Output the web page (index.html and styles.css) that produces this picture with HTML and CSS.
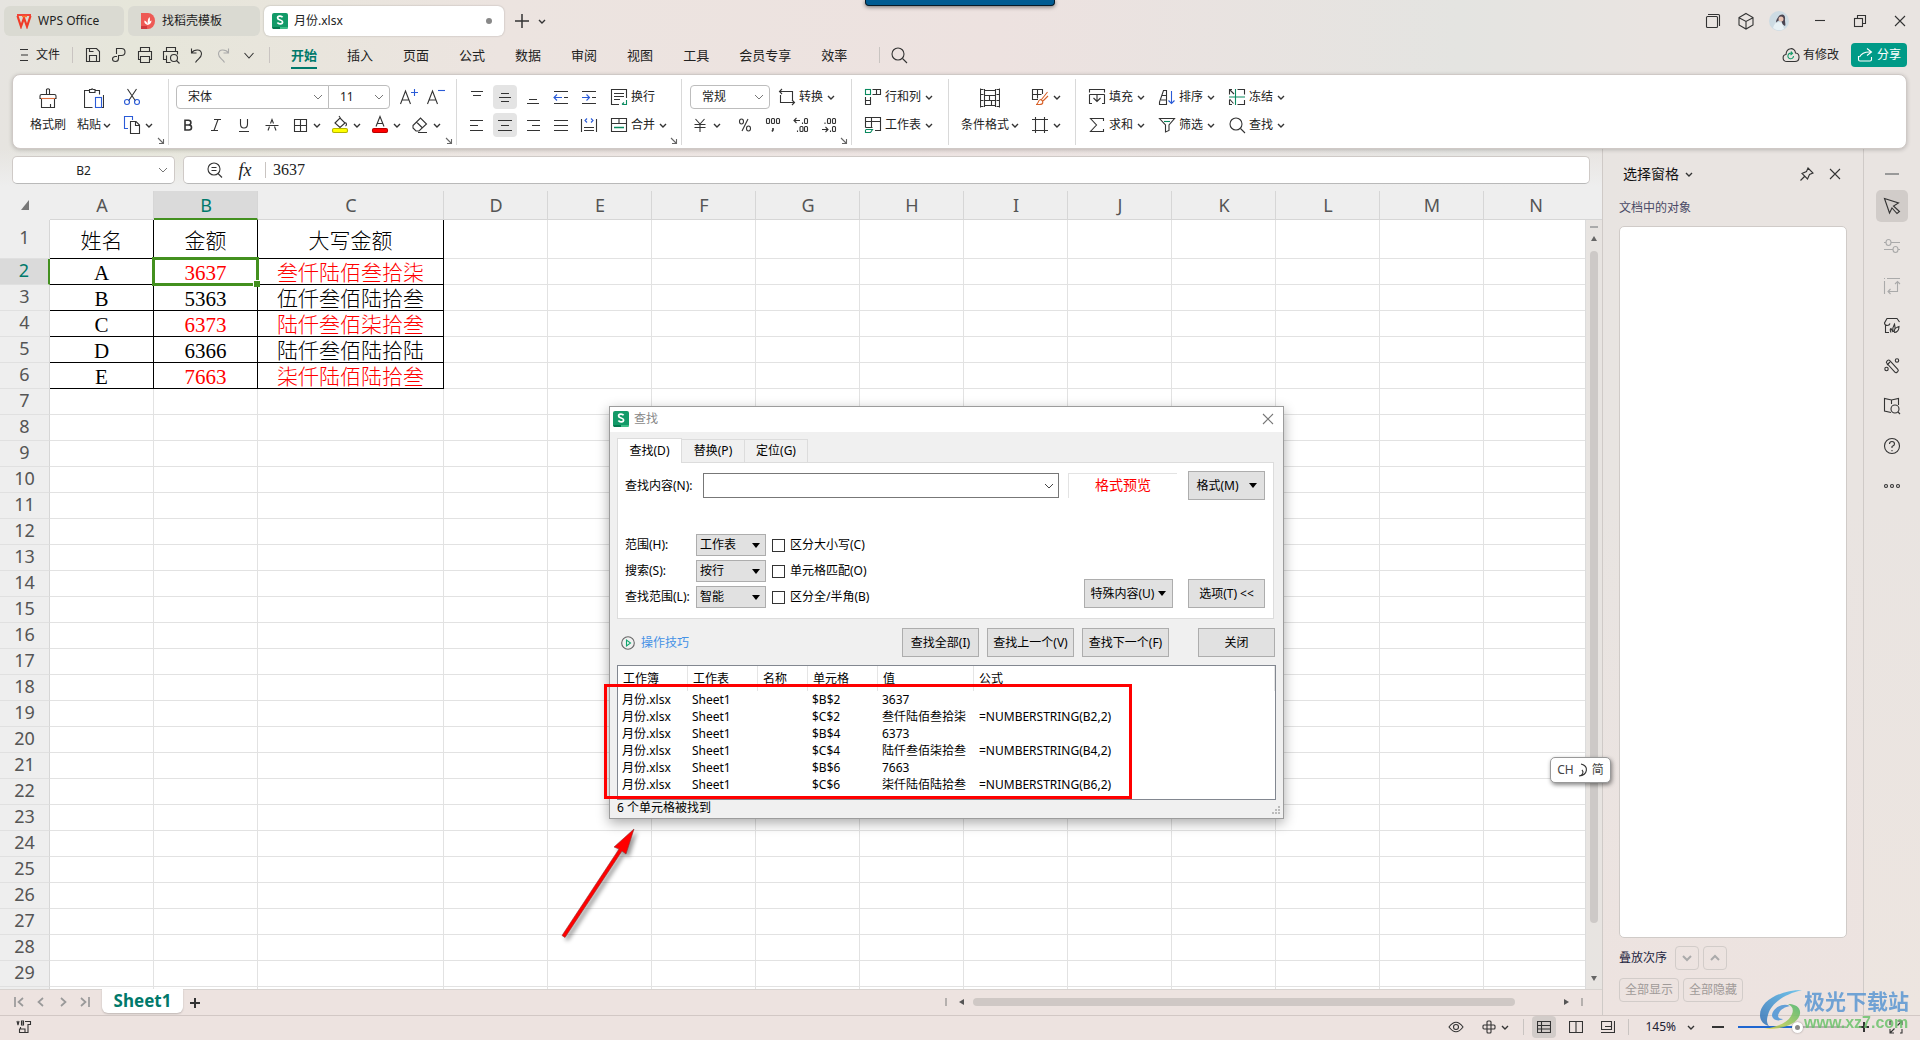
FILE: index.html
```html
<!DOCTYPE html>
<html lang="zh-CN">
<head>
<meta charset="utf-8">
<title>月份.xlsx</title>
<link rel="stylesheet" href="styles.css">
</head>
<body>
<svg class="defs" aria-hidden="true">
  <symbol id="chev" viewBox="0 0 8 8"><path d="M1 3l3 3 3-3" stroke-width="1.4"/></symbol>
  <symbol id="sheet-logo" viewBox="0 0 16 16"><rect width="16" height="16" rx="2" fill="#129a68" stroke="none"/><path d="M0 14h8v2H1z" fill="#04794f" stroke="none"/><path d="M8 14h8v1l-1 1H8z" fill="#3bbd86" stroke="none"/><path d="M10.600 4.300C9.500 2.700 5.600 2.700 5.600 5c0 2.500 5 1.500 5 4 0 2.300-4 2.300-5.200.6" stroke="#fff" stroke-width="1.700"/></symbol>
  <symbol id="launch" viewBox="0 0 8 8"><path d="M1 1l5 5M6.500 2v4.500H2" stroke="#666"/></symbol>
  <symbol id="lens" viewBox="0 0 20 20"><circle cx="9" cy="9" r="6"/><path d="M13.500 13.500L18 18"/></symbol>
</svg>

<div class="screen-clip"></div>

<header class="titlebar">
  <button class="doc-tab home"><svg width="16" height="16" viewBox="0 0 16 16"><path d="M1 2h14" stroke="#f04438" stroke-width="2"/><path d="M1.500 3l3.500 10.500L8 5l3 8.500L14.500 3" stroke="#f03c28" stroke-width="2.200"/><path d="M6 3.500h5" stroke="#ff7a30" stroke-width="1.500"/></svg><span>WPS Office</span></button>
  <button class="doc-tab tpl"><svg width="16" height="16" viewBox="0 0 16 16"><path d="M1 0h7a7 8 0 0 1 0 16H1z" fill="#ee5a55" stroke="none"/><path d="M1 13h6v3H1z" fill="#cf3a3f" stroke="none"/><path d="M7.500 12C4.500 11 4 9 4.500 7.500 6.500 8 7.500 10 7.500 12c0-4 .5-6.500 2-8 1 3 .5 5-2 8 1-3 2.500-4 4-4.500 0 2.500-1.500 4-4 4.500z" fill="#fff" stroke="none"/></svg><span>找稻壳模板</span></button>
  <button class="doc-tab active"><svg width="16" height="16"><use href="#sheet-logo"/></svg><span>月份.xlsx</span><i class="dirty"></i></button>
  <button class="plain" aria-label="新建"><svg width="16" height="16" viewBox="0 0 16 16"><path d="M8 1v14M1 8h14" stroke-width="1.500"/></svg></button>
  <button class="plain" aria-label="更多"><svg width="8" height="8"><use href="#chev"/></svg></button>
  <div class="window-tools">
    <button class="plain" aria-label="标签列表"><svg width="20" height="20" viewBox="0 0 20 20"><rect x="3.500" y="5.500" width="11" height="11" rx="1"/><path d="M5 3.500h10.500q1 0 1 1V15"/></svg></button>
    <button class="plain" aria-label="应用"><svg width="20" height="20" viewBox="0 0 20 20"><path d="M10 2.500l7 4v7.500l-7 4-7-4V6.500zM3.500 7L10 10.500 16.500 7M10 10.500V18"/></svg></button>
    <button class="plain avatar" aria-label="账户"><svg width="20" height="20" viewBox="0 0 20 20"><circle cx="10" cy="10" r="10" fill="#cddbe3" stroke="none"/><path d="M4 17c1-4 3-6 6-6l3 1 2 6a10 10 0 0 1-11-1z" fill="#e8f1f5" stroke="none"/><path d="M11 4c3-1.500 5.500 0 5 4-.3 3 1 5 0 7-2.500-1-3-3-3.500-5l-3-.5-2.500 2c0-3 2-5.500 4-7.500z" fill="#4a4450" stroke="none"/><circle cx="12" cy="8" r="2.500" fill="#e8c3b4" stroke="none"/></svg></button>
    <button class="plain win" aria-label="最小化"><svg width="20" height="20" viewBox="0 0 20 20"><path d="M5 9.500h10"/></svg></button>
    <button class="plain win" aria-label="还原"><svg width="20" height="20" viewBox="0 0 20 20"><rect x="4.500" y="7.500" width="8" height="8"/><path d="M7.500 7.500v-3h8v8h-3"/></svg></button>
    <button class="plain win" aria-label="关闭"><svg width="20" height="20" viewBox="0 0 20 20"><path d="M5 5l10 10M15 5L5 15"/></svg></button>
  </div>
</header>

<nav class="menubar">
  <button class="plain file"><svg width="12" height="14" viewBox="0 0 12 14"><path d="M2 1.500h8M3 7h7M2 12.500h8"/></svg><span>文件</span></button>
  <i class="vsep"></i>
  <div class="quick">
    <button class="plain" aria-label="保存"><svg width="20" height="20" viewBox="0 0 20 20"><path d="M3.500 3.500h10l3 3v10h-13zM6.500 16v-5.500h7V16M6.500 3.500V6.500h4"/></svg></button>
    <button class="plain" aria-label="导出"><svg width="20" height="20" viewBox="0 0 20 20"><path d="M7.500 9V3.500h5a3.500 3.500 0 0 1 0 7H9.500v3q0 3-3 3t-3-2.500q0-2 2.500-2.500h2"/></svg></button>
    <button class="plain" aria-label="打印"><svg width="20" height="20" viewBox="0 0 20 20"><path d="M5.500 6.500v-4h9v4M5.500 14.500h-2v-8h13v8h-2M5.500 11.500h9v6h-9z"/></svg></button>
    <button class="plain" aria-label="打印预览"><svg width="20" height="20" viewBox="0 0 20 20"><path d="M5.500 6.500v-4h9v4M5.500 14.500h-3v-8h14v3M5.500 10.500v7h4"/><circle cx="13" cy="13" r="3.500"/><path d="M15.500 15.500l3 3"/></svg></button>
    <button class="plain" aria-label="撤销"><svg width="20" height="20" viewBox="0 0 20 20"><path d="M4.500 3.500v4.500h5M4.500 8C7 4 14.500 3.500 14.500 9c0 4-4 5-6 8.500"/></svg></button>
    <button class="plain off" aria-label="恢复"><svg width="20" height="20" viewBox="0 0 20 20"><path d="M15.500 3.500v4.500h-5M15.500 8C13 4 5.500 3.500 5.500 9c0 4 4 5 6 8.500"/></svg></button>
    <button class="plain" aria-label="自定义"><svg width="20" height="20" viewBox="0 0 20 20"><path d="M5.500 8l4.500 5 4.500-5"/></svg></button>
  </div>
  <i class="vsep"></i>
  <div class="tabs">
    <a href="#" class="on">开始</a><a href="#">插入</a><a href="#">页面</a><a href="#">公式</a><a href="#">数据</a><a href="#">审阅</a><a href="#">视图</a><a href="#">工具</a><a href="#">会员专享</a><a href="#">效率</a>
  </div>
  <i class="vsep"></i>
  <button class="plain find" aria-label="搜索"><svg width="20" height="20"><use href="#lens"/></svg></button>
  <div class="cloud">
    <svg width="18" height="16" viewBox="0 0 18 16"><path d="M5 14.500C0 14.500 0 8 4 7.500 4.500 0 13 0 13.500 6c5 .5 4.500 8.500-.5 8.500z"/><path d="M11.500 9a2.800 2.800 0 1 1-1.500-2.500M9 4.500l1.500 2L8.500 8" stroke="#129a68"/></svg><span>有修改</span>
    <button class="share"><svg width="16" height="16" viewBox="0 0 16 16"><path d="M10 1.500L14.500 5 10 8.500M14 5C7 4.500 4 7 2.500 10M1.500 9v3.500q0 1.500 1.500 1.500h10q1.500 0 1.500-1.500V10" stroke="#fff"/></svg><span>分享</span></button>
  </div>
</nav>

<section class="ribbon">
  <div class="group g-clip">
    <button class="big"><svg width="20" height="20" viewBox="0 0 20 20"><path d="M8.500 6.500V1.500q1.500-1.500 3 0v5M3.500 6.500h13q1.500 0 1.500 1.500v2.500H2V8q0-1.500 1.500-1.500zM3.500 11v8.500h13V11M12.500 19v-3"/><path d="M3 10.500h14" stroke="#e07040"/></svg><span>格式刷</span></button>
    <button class="big"><svg width="20" height="20" viewBox="0 0 20 20"><path d="M5 2.500H.5v17h8M11 2.500h4.500v4M5.500 4.500v-3h2q.5-1.500 1.500 0h2v3z"/><path d="M19.500 7v12.500h-8"/><rect x="11.500" y="9.500" width="6" height="10" stroke="#2a5bd7" fill="#fff"/></svg><span>粘贴<svg width="8" height="8"><use href="#chev"/></svg></span></button>
    <div class="rows">
      <div class="row"><button class="tool" aria-label="剪切"><svg width="20" height="20" viewBox="0 0 20 20"><path d="M5.500 2l8 12M14.500 2l-8 12"/><circle cx="5" cy="15" r="2.500" stroke="#2a5bd7"/><circle cx="15" cy="15" r="2.500" stroke="#2a5bd7"/></svg></button></div>
      <div class="row"><button class="tool" aria-label="复制"><svg width="20" height="20" viewBox="0 0 20 20"><path d="M6 13.500H2.500v-12h8V5" stroke="#2a5bd7"/><path d="M8.500 6.500h5.500l3.500 3.500v8.500h-9zM13.500 6.500v4h4"/></svg><svg width="8" height="8"><use href="#chev"/></svg></button></div>
    </div>
    <svg class="launch" width="8" height="8"><use href="#launch"/></svg>
  </div>

  <div class="group g-font">
    <div class="rows">
      <div class="row">
        <select class="combo font-name" aria-label="字体"><option>宋体</option></select><select class="combo font-size" aria-label="字号"><option>11</option></select>
        <button class="tool step" aria-label="增大字号"><svg width="20" height="20" viewBox="0 0 20 20"><path d="M1.500 17L6.500 4l5 13M3 13h7"/><path d="M12 5.500h7M15.500 2v7" stroke="#2a5bd7"/></svg></button>
        <button class="tool" aria-label="减小字号"><svg width="20" height="20" viewBox="0 0 20 20"><path d="M1.500 17L6.500 4l5 13M3 13h7"/><path d="M12 3.500h7" stroke="#2a5bd7"/></svg></button>
      </div>
      <div class="row tight">
        <button class="tool" aria-label="加粗"><svg width="20" height="20" viewBox="0 0 20 20"><path d="M7 5.200h3.500a2.300 2.300 0 0 1 0 4.800H7zM7 10h4a2.500 2.500 0 0 1 0 5H7z" stroke-width="1.600"/></svg></button>
        <button class="tool" aria-label="倾斜"><svg width="20" height="20" viewBox="0 0 20 20"><path d="M8 4.500h7M5 15.500h7M12 4.500l-4 11"/></svg></button>
        <button class="tool" aria-label="下划线"><svg width="20" height="20" viewBox="0 0 20 20"><path d="M6.500 4v5q0 4 3.500 4t3.500-4V4M5 16.500h10"/></svg></button>
        <button class="tool" aria-label="删除线"><svg width="20" height="20" viewBox="0 0 20 20"><path d="M6 15.500l1.500-4M14 15.500l-1.500-4M8.500 8.500L10 4.500l1.500 4M3.500 10.500h13"/></svg></button>
        <button class="tool split" aria-label="边框"><svg width="20" height="20" viewBox="0 0 20 20"><path d="M4.500 4.500h12v12h-12zM10.500 4.500v12M4.500 10.500h12"/></svg><svg width="8" height="8"><use href="#chev"/></svg></button>
        <button class="tool split" aria-label="填充颜色"><svg width="20" height="20" viewBox="0 0 20 20"><path d="M5 8l5-5 5 5-5 4.500zM9 1l2 3M15.500 7.500q2 2 0 3.500"/><rect x="2.500" y="13.500" width="15" height="4" rx="1.500" fill="#ff0" stroke="#b5b500"/></svg><svg width="8" height="8"><use href="#chev"/></svg></button>
        <button class="tool split" aria-label="字体颜色"><svg width="20" height="20" viewBox="0 0 20 20"><path d="M6 11.500L10 1.500l4 10M7.500 8.500h5"/><rect x="2.500" y="13.500" width="15" height="4" rx="1.500" fill="#f00" stroke="#b00"/></svg><svg width="8" height="8"><use href="#chev"/></svg></button>
        <button class="tool split" aria-label="清除"><svg width="20" height="20" viewBox="0 0 20 20"><path d="M3 10.500l7.500-7.500 6 6-7.500 7H6L3 13zM6.500 7l6 6M8 17.500h9"/></svg><svg width="8" height="8"><use href="#chev"/></svg></button>
      </div>
    </div>
    <svg class="launch" width="8" height="8"><use href="#launch"/></svg>
  </div>

  <div class="group g-align">
    <div class="rows">
      <div class="row gap4">
        <button class="tool" aria-label="顶端对齐"><svg width="20" height="20" viewBox="0 0 20 20"><path d="M4 4.500h12M6 8.500h8"/></svg></button>
        <button class="tool sel" aria-label="垂直居中"><svg width="20" height="20" viewBox="0 0 20 20"><path d="M6 6.500h8M4 10.500h12M6 14.500h8"/></svg></button>
        <button class="tool" aria-label="底端对齐"><svg width="20" height="20" viewBox="0 0 20 20"><path d="M6 12.500h8M4 16.500h12"/></svg></button>
        <button class="tool" aria-label="减少缩进"><svg width="20" height="20" viewBox="0 0 20 20"><path d="M3 4.500h14M13 10.500h4M3 16.500h14"/><path d="M3 10.500h8M6 7.500l-3 3 3 3" stroke="#2a5bd7"/></svg></button>
        <button class="tool" aria-label="增加缩进"><svg width="20" height="20" viewBox="0 0 20 20"><path d="M3 4.500h14M13 10.500h4M3 16.500h14"/><path d="M3 10.500h8M7.500 7.500l3 3-3 3" stroke="#2a5bd7"/></svg></button>
        <button class="tool lab"><svg width="20" height="20" viewBox="0 0 20 20"><path d="M10 17.500H2.500v-15h15V11M5 6.500h10M5 9.500h10M5 12.500h6"/><path d="M17.500 13v4.500H13M15 15.500l-2 2" stroke="#0a8a5f"/></svg><span>换行</span></button>
      </div>
      <div class="row gap4">
        <button class="tool" aria-label="左对齐"><svg width="20" height="20" viewBox="0 0 20 20"><path d="M3 5.500h13M3 10.500h8M3 15.500h13"/></svg></button>
        <button class="tool sel" aria-label="水平居中"><svg width="20" height="20" viewBox="0 0 20 20"><path d="M3 5.500h14M6 10.500h8M3 15.500h14"/></svg></button>
        <button class="tool" aria-label="右对齐"><svg width="20" height="20" viewBox="0 0 20 20"><path d="M4 5.500h13M9 10.500h8M4 15.500h13"/></svg></button>
        <button class="tool" aria-label="两端对齐"><svg width="20" height="20" viewBox="0 0 20 20"><path d="M3 5.500h14M3 10.500h14M3 15.500h14"/></svg></button>
        <button class="tool" aria-label="分散对齐"><svg width="20" height="20" viewBox="0 0 20 20"><path d="M2.500 4v13M17.500 4v13M5 12.500h10M5 15.500h10"/><path d="M8 3.500l-2 2 2 2M12 3.500l2 2-2 2" stroke="#2a5bd7"/></svg></button>
        <button class="tool lab"><svg width="20" height="20" viewBox="0 0 20 20"><path d="M2.500 3.500h15v13h-15zM2.500 8.500h15M10 3.500v5"/><path d="M5 12.500h10" stroke="#0a8a5f" stroke-width="1.500"/></svg><span>合并</span><svg width="8" height="8"><use href="#chev"/></svg></button>
      </div>
    </div>
    <svg class="launch" width="8" height="8"><use href="#launch"/></svg>
  </div>

  <div class="group g-num">
    <div class="rows">
      <div class="row">
        <select class="combo num-format" aria-label="数字格式"><option>常规</option></select>
        <button class="tool lab"><svg width="20" height="20" viewBox="0 0 20 20"><path d="M5 2l-2.500 2.500L5 7M2.500 4.500H15.500V13M3.500 8v7.500H17.500M15 13l2.500 2.500L15 18"/></svg><span>转换</span><svg width="8" height="8"><use href="#chev"/></svg></button>
      </div>
      <div class="row gap4">
        <button class="tool yen" aria-label="货币"><svg width="20" height="20" viewBox="0 0 20 20"><path d="M5.500 4l4.500 5 4.500-5M4.500 9.500h11M4.500 12.500h11M10 9v8"/></svg><svg width="8" height="8"><use href="#chev"/></svg></button>
        <button class="tool" aria-label="百分比"><svg width="20" height="20" viewBox="0 0 20 20"><ellipse cx="6.500" cy="6.500" rx="2" ry="2.500"/><ellipse cx="13.500" cy="13.500" rx="2" ry="2.500"/><path d="M13 4L7 16"/></svg></button>
        <button class="tool" aria-label="千位分隔"><svg width="20" height="20" viewBox="0 0 20 20"><rect x="3.500" y="3.500" width="3" height="5" rx="1"/><rect x="8.500" y="3.500" width="3" height="5" rx="1"/><rect x="13.500" y="3.500" width="3" height="5" rx="1"/><path d="M10 13v2l-1 1.500" stroke-width="1.600"/></svg></button>
        <button class="tool" aria-label="增加小数位"><svg width="20" height="20" viewBox="0 0 20 20"><path d="M9 5.500H3M5.500 3L3 5.500 5.500 8M11.500 7.500v1.500M6.500 15.500v1.500"/><rect x="13.500" y="3.500" width="3" height="5" rx="1"/><rect x="9" y="11.500" width="3" height="5" rx="1"/><rect x="13.500" y="11.500" width="3" height="5" rx="1"/></svg></button>
        <button class="tool" aria-label="减少小数位"><svg width="20" height="20" viewBox="0 0 20 20"><path d="M3 14.500h6M6.500 12L9 14.500 6.500 17M6 7.500v1.500M11.500 15.500v1.500"/><rect x="8.500" y="3.500" width="3" height="5" rx="1"/><rect x="13.500" y="3.500" width="3" height="5" rx="1"/><rect x="13.500" y="11.500" width="3" height="5" rx="1"/></svg></button>
      </div>
    </div>
    <svg class="launch" width="8" height="8"><use href="#launch"/></svg>
  </div>

  <div class="group g-rows">
    <div class="rows">
      <div class="row"><button class="tool lab"><svg width="20" height="20" viewBox="0 0 20 20"><path d="M9.500 2.500h8v5h-8M13.500 2.500v5M2.500 10v7.500h5V10M2.500 13.500h5"/><rect x="2.500" y="2.500" width="5" height="5" stroke="#0a8a5f"/></svg><span>行和列</span><svg width="8" height="8"><use href="#chev"/></svg></button></div>
      <div class="row"><button class="tool lab"><svg width="20" height="20" viewBox="0 0 20 20"><path d="M2.500 12.500v-10h15v13H12M2.500 6.500h15M8.500 2.500v10M2.500 12.500h7"/><path d="M2.500 15v2.500h5l2-3h-7" stroke="#0a8a5f"/></svg><span>工作表</span><svg width="8" height="8"><use href="#chev"/></svg></button></div>
    </div>
  </div>

  <div class="group g-cond">
    <button class="big"><svg width="20" height="20" viewBox="0 0 20 20"><path d="M.5 .5v19M19.500.5v19M.5 1.500h3M16.500 1.500h3M.5 6.500h3M16.500 6.500h3M.5 12.500h3M16.500 12.500h3M.5 18.500h3M16.500 18.500h3M4.500 1v18M15.500 1v18M4.500 2.500h11M4.500 7.500h11M4.500 12.500h11M4.500 17.500h11M9.500 7.500v5M11.500 12.500v5"/></svg><span>条件格式<svg width="8" height="8"><use href="#chev"/></svg></span></button>
    <div class="rows">
      <div class="row"><button class="tool" aria-label="单元格样式"><svg width="20" height="20" viewBox="0 0 20 20"><path d="M8 12.500H2.500v-10h10V7M2.500 7.500h9M7.500 2.500v9"/><path d="M17.500 5l-6 7.500M18 9l-5 5M6 17.500c3 0 1-4 4.500-5 3 1 3.500 5-1 5z" stroke="#d8622a"/></svg><svg width="8" height="8"><use href="#chev"/></svg></button></div>
      <div class="row"><button class="tool" aria-label="单元格"><svg width="20" height="20" viewBox="0 0 20 20"><path d="M5.500 2v16M14.500 2v16M2 4.500h16M2 15.500h16"/></svg><svg width="8" height="8"><use href="#chev"/></svg></button></div>
    </div>
  </div>

  <div class="group g-edit">
    <div class="rows">
      <div class="row">
        <button class="tool lab"><svg width="20" height="20" viewBox="0 0 20 20"><path d="M2.500 5.500v-3h15v3M2.500 7.500h15M2.500 7.500v9H5M17.500 7.500v9H15M10 7v7.500M6.500 11l3.500 3.500 3.500-3.500"/></svg><span>填充</span><svg width="8" height="8"><use href="#chev"/></svg></button>
        <button class="tool lab"><svg width="20" height="20" viewBox="0 0 20 20"><path d="M2.500 17.500V15L6.500 3.500h3v14zM5 8.500h4.500M4 13h5.500"/><path d="M14.500 4v12.500M11.500 13.500l3 3 3-3" stroke="#2a5bd7"/></svg><span>排序</span><svg width="8" height="8"><use href="#chev"/></svg></button>
        <button class="tool lab"><svg width="20" height="20" viewBox="0 0 20 20"><path d="M5 2.500H2.500v5M10.500 2.500h7v5M2.500 13v4.500H5M10.500 17.500h7V13M3 3l4 4M2.500 12l4 4.500"/><path d="M2 10h16M8.500 2v16" stroke="#0a8a5f"/></svg><span>冻结</span><svg width="8" height="8"><use href="#chev"/></svg></button>
      </div>
      <div class="row">
        <button class="tool lab"><svg width="20" height="20" viewBox="0 0 20 20"><path d="M16.500 6V3.500h-13L9.500 10l-6 6.500h13V14"/></svg><span>求和</span><svg width="8" height="8"><use href="#chev"/></svg></button>
        <button class="tool lab"><svg width="20" height="20" viewBox="0 0 20 20"><path d="M2.500 3.500h15L12 10v5.500L8.500 17v-7z"/><path d="M7 6.500h6" stroke="#0a8a5f"/></svg><span>筛选</span><svg width="8" height="8"><use href="#chev"/></svg></button>
        <button class="tool lab"><svg width="20" height="20"><use href="#lens"/></svg><span>查找</span><svg width="8" height="8"><use href="#chev"/></svg></button>
      </div>
    </div>
  </div>
</section>

<main class="work">
  <div class="sheet-side">
    <div class="formula-row">
      <input class="name-box" aria-label="名称框" value="B2">
      <div class="formula-box">
        <button class="plain" aria-label="缩小"><svg width="20" height="20" viewBox="0 0 20 20"><circle cx="10" cy="9" r="6"/><path d="M14 13.500l4 4M7.500 7.500h5M7.500 10.500h5"/></svg></button>
        <button class="plain fx" aria-label="插入函数">fx</button>
        <i class="vsep"></i>
        <input aria-label="编辑栏" value="3637">
      </div>
    </div>
    <div class="grid-row">
      <div class="grid-view">
        <table class="grid" id="grid">
          <colgroup><col class="c-head"><col><col><col class="c-wide"></colgroup>
          <thead><tr><th class="corner"><svg width="8" height="10" viewBox="0 0 8 10"><path d="M8 0v10H0z" fill="#777" stroke="none"/></svg></th><th>A</th><th class="hot">B</th><th>C</th></tr></thead>
          <tbody>
            <tr class="first"><th>1</th><td>姓名</td><td>金额</td><td>大写金额</td></tr>
            <tr><th class="hot">2</th><td>A</td><td class="red current">3637</td><td class="red">叁仟陆佰叁拾柒</td></tr>
            <tr><th>3</th><td>B</td><td>5363</td><td>伍仟叁佰陆拾叁</td></tr>
            <tr><th>4</th><td>C</td><td class="red">6373</td><td class="red">陆仟叁佰柒拾叁</td></tr>
            <tr><th>5</th><td>D</td><td>6366</td><td>陆仟叁佰陆拾陆</td></tr>
            <tr><th>6</th><td>E</td><td class="red">7663</td><td class="red">柒仟陆佰陆拾叁</td></tr>
          </tbody>
        </table>
      </div>
      <div class="vscroll">
        <div class="vs-head"></div>
        <i class="vs-dash"></i>
        <svg width="8" height="6" viewBox="0 0 8 6"><path d="M4 0l3 5H1z" fill="#666" stroke="none"/></svg>
        <i class="vs-thumb"></i>
        <svg width="8" height="6" viewBox="0 0 8 6"><path d="M4 6L1 1h6z" fill="#666" stroke="none"/></svg>
      </div>
    </div>
    <div class="sheet-tabs">
      <div class="nav-arrows">
        <svg width="12" height="12" viewBox="0 0 12 12"><path d="M2 1v10M10 2L5.500 6l4.500 4"/></svg>
        <svg width="12" height="12" viewBox="0 0 12 12"><path d="M8 2L3.500 6 8 10"/></svg>
        <svg width="12" height="12" viewBox="0 0 12 12"><path d="M4 2l4.500 4L4 10"/></svg>
        <svg width="12" height="12" viewBox="0 0 12 12"><path d="M10 1v10M2 2l4.500 4L2 10"/></svg>
      </div>
      <button class="sheet-tab">Sheet1</button>
      <button class="plain add" aria-label="新建工作表"><svg width="10" height="10" viewBox="0 0 10 10"><path d="M5 0v10M0 5h10" stroke-width="2"/></svg></button>
      <div class="hscroll">
        <i class="tick"></i>
        <svg width="6" height="8" viewBox="0 0 6 8"><path d="M0 4l5-3v6z" fill="#555" stroke="none"/></svg>
        <i class="hs-thumb"></i>
        <svg width="6" height="8" viewBox="0 0 6 8"><path d="M6 4L1 1v6z" fill="#555" stroke="none"/></svg>
        <i class="tick"></i>
      </div>
    </div>
  </div>

  <aside class="pane">
    <div class="pane-head">
      <button class="plain pane-title">选择窗格<svg width="8" height="8"><use href="#chev"/></svg></button>
      <button class="plain pin" aria-label="固定"><svg width="16" height="16" viewBox="0 0 16 16"><path d="M9 2l5 5-3.500 1.500L8.500 13 3 7.500l4.500-2zM5.500 10.500L1.500 14.500"/></svg></button>
      <button class="plain" aria-label="关闭窗格"><svg width="12" height="12" viewBox="0 0 12 12"><path d="M1 1l10 10M11 1L1 11"/></svg></button>
    </div>
    <p class="pane-sub">文档中的对象</p>
    <div class="object-list"></div>
    <div class="order"><span>叠放次序</span>
      <button aria-label="下移"><svg width="12" height="8" viewBox="0 0 12 8"><path d="M2 2l4 4 4-4" stroke="#aaa" stroke-width="2"/></svg></button><button aria-label="上移"><svg width="12" height="8" viewBox="0 0 12 8"><path d="M2 6l4-4 4 4" stroke="#aaa" stroke-width="2"/></svg></button></div>
    <div class="show"><button disabled>全部显示</button><button disabled>全部隐藏</button></div>
  </aside>

  <aside class="rail">
    <i class="rail-dash"></i>
    <button class="on" aria-label="选择"><svg width="20" height="20" viewBox="0 0 20 20"><path d="M2.500 2.500l14 4.500-5 3 6 5.500-2.500 2-5-5.500-2.500 5z"/></svg></button>
    <button class="off" aria-label="属性"><svg width="20" height="20" viewBox="0 0 20 20"><path d="M2 6.500h2M9 6.500h9M2 13.500h9M16 13.500h2"/><ellipse cx="6.500" cy="6.500" rx="2.500" ry="3"/><ellipse cx="13.500" cy="13.500" rx="2.500" ry="3"/></svg></button>
    <button class="off" aria-label="智能布局"><svg width="20" height="20" viewBox="0 0 20 20"><path d="M2 2.500h1M5 2.500h13M2.500 5v13M15.500 6v9.500H6M13 8l2.500-2.500L18 8M8.500 13L6 15.500 8.500 18"/></svg></button>
    <button aria-label="稻壳"><svg width="20" height="20" viewBox="0 0 20 20"><path d="M8 7.500Q7.500 9.500 5 9.500 2.500 9 2.500 7L5 2.500h10L17.500 6M3.500 9.500v7H7M9 16.500c-1.500-3 0-4 0-4l2 3.500c-1-4 1.500-8 1.500-8 1.500 4-.5 8-.5 8 0-3 3-5 5-5.500 0 4-2 6-5 6"/></svg></button>
    <button aria-label="工具"><svg width="20" height="20" viewBox="0 0 20 20"><rect x="3" y="8" width="15" height="4" rx="1.500" transform="rotate(48 10 10)"/><circle cx="15" cy="4.500" r="1.700"/><circle cx="4.500" cy="13" r="1.700"/><path d="M5 9l3-3"/></svg></button>
    <button aria-label="查阅"><svg width="20" height="20" viewBox="0 0 20 20"><path d="M9 16.500L2.500 15V2.500l7 1.500 7-1.500V9M9.500 4v4"/><circle cx="13" cy="13" r="4"/><path d="M16 16l2 2"/></svg></button>
    <button aria-label="帮助"><svg width="20" height="20" viewBox="0 0 20 20"><circle cx="10" cy="10" r="7.500"/><path d="M7.500 8q0-2.500 2.500-2.500T12.500 8q0 1.500-2.500 2.500v1.500M10 14v1.200"/></svg></button>
    <button aria-label="更多"><svg width="20" height="20" viewBox="0 0 20 20"><circle cx="4" cy="10" r="1.500"/><circle cx="10" cy="10" r="1.500"/><circle cx="16" cy="10" r="1.500"/></svg></button>
  </aside>
</main>

<footer class="status">
  <button class="plain macro" aria-label="宏"><svg width="16" height="14" viewBox="0 0 16 14"><path d="M1 1l1 4 1-4M5.500 1v4h2v-2h-2 2V1zM9 1.500h5.500v3H12v8H3.500V9H9v3.500M4.500 7v2"/></svg></button>
  <div class="status-right">
    <button class="plain" aria-label="护眼"><svg width="16" height="16" viewBox="0 0 16 16"><path d="M1 8q7-9.500 14 0-7 9.500-14 0z"/><circle cx="8" cy="8" r="2.500"/></svg></button>
    <button class="plain dd" aria-label="定位"><svg width="14" height="14" viewBox="0 0 14 14"><rect x="5" y="1" width="4" height="12" rx="1"/><rect x="1" y="5" width="12" height="4" rx="1"/></svg><svg width="8" height="8"><use href="#chev"/></svg></button>
    <i class="vsep"></i>
    <button class="plain view on" aria-label="普通视图"><svg width="14" height="14" viewBox="0 0 14 14"><path d="M.5 1.500h13v11H.5zM.5 5.500h13M.5 9h13M4.500 1.500v11"/></svg></button>
    <button class="plain view" aria-label="分页预览"><svg width="14" height="14" viewBox="0 0 14 14"><path d="M.5 1.500h13v11H.5zM7 1.500v11"/></svg></button>
    <button class="plain view" aria-label="页面布局"><svg width="14" height="14" viewBox="0 0 14 14"><path d="M.5 1.500h10v8H.5zM13.500 1v11.500H0M4 6.500h6.500"/></svg></button>
    <i class="vsep"></i>
    <button class="plain zoomv">145%<svg width="8" height="8"><use href="#chev"/></svg></button>
    <button class="plain" aria-label="缩小显示"><svg width="12" height="12" viewBox="0 0 12 12"><path d="M0 6h12" stroke-width="2"/></svg></button>
    <input type="range" class="zoom" aria-label="显示比例" min="0" max="100" value="56">
    <button class="plain" aria-label="放大显示"><svg width="12" height="12" viewBox="0 0 12 12"><path d="M1 6h10M6 1v10" stroke-width="2"/></svg></button>
    <button class="plain full" aria-label="全屏"><svg width="14" height="14" viewBox="0 0 14 14"><path d="M9 1h4v4M13 1L8.500 5.500M5 13H1V9M1 13l4.500-4.500M1 5V1h2M13 9v4h-2"/></svg></button>
  </div>
</footer>

<section class="dialog">
  <header class="dlg-title"><svg width="16" height="16"><use href="#sheet-logo"/></svg><span>查找</span><button class="plain" aria-label="关闭对话框"><svg width="12" height="12" viewBox="0 0 12 12"><path d="M1 1l10 10M11 1L1 11" stroke="#777"/></svg></button></header>
  <div class="dlg-tabs"><button class="on">查找(D)</button><button>替换(P)</button><button>定位(G)</button></div>
  <form class="dlg-panel">
    <div class="what">
      <label for="what">查找内容(N):</label><input id="what" type="text">
      <output>格式预览</output>
      <button type="button" class="btn w77">格式(M)<i class="tri"></i></button>
    </div>
    <div class="opts">
      <div class="opt-grid">
        <label for="o1">范围(H):</label><select id="o1"><option>工作表</option></select><label class="chk"><input type="checkbox">区分大小写(C)</label>
        <label for="o2">搜索(S):</label><select id="o2"><option>按行</option></select><label class="chk"><input type="checkbox">单元格匹配(O)</label>
        <label for="o3">查找范围(L):</label><select id="o3"><option>智能</option></select><label class="chk"><input type="checkbox">区分全/半角(B)</label>
      </div>
      <button type="button" class="btn w89">特殊内容(U)<i class="tri"></i></button>
      <button type="button" class="btn w77">选项(T) &lt;&lt;</button>
    </div>
  </form>
  <div class="dlg-actions">
    <a href="#"><svg width="14" height="14" viewBox="0 0 14 14"><circle cx="7" cy="7" r="6.300" stroke="#666"/><path d="M5.500 4v6L9.500 7z" stroke="#12a56f"/></svg>操作技巧</a>
    <button class="btn w77">查找全部(I)</button><button class="btn w87">查找上一个(V)</button><button class="btn w87">查找下一个(F)</button><button class="btn w77 close">关闭</button>
  </div>
  <div class="results">
    <table>
      <colgroup><col class="r70"><col class="r70"><col class="r50"><col class="r70"><col class="r96"><col></colgroup>
      <thead><tr><th>工作簿</th><th>工作表</th><th>名称</th><th>单元格</th><th>值</th><th>公式</th></tr></thead>
      <tbody>
        <tr><td>月份.xlsx</td><td>Sheet1</td><td></td><td>$B$2</td><td>3637</td><td></td></tr>
        <tr><td>月份.xlsx</td><td>Sheet1</td><td></td><td>$C$2</td><td>叁仟陆佰叁拾柒</td><td>=NUMBERSTRING(B2,2)</td></tr>
        <tr><td>月份.xlsx</td><td>Sheet1</td><td></td><td>$B$4</td><td>6373</td><td></td></tr>
        <tr><td>月份.xlsx</td><td>Sheet1</td><td></td><td>$C$4</td><td>陆仟叁佰柒拾叁</td><td>=NUMBERSTRING(B4,2)</td></tr>
        <tr><td>月份.xlsx</td><td>Sheet1</td><td></td><td>$B$6</td><td>7663</td><td></td></tr>
        <tr><td>月份.xlsx</td><td>Sheet1</td><td></td><td>$C$6</td><td>柒仟陆佰陆拾叁</td><td>=NUMBERSTRING(B6,2)</td></tr>
      </tbody>
    </table>
  </div>
  <div class="dlg-status"><span>6 个单元格被找到</span><svg width="9" height="9" viewBox="0 0 9 9"><path d="M7 0h2v2H7zM7 3h2v2H7zM4 3h2v2H4zM7 6h2v2H7zM4 6h2v2H4zM1 6h2v2H1z" fill="#bbb" stroke="none"/></svg></div>
  <div class="mark-box"></div>
</section>

<svg class="mark-arrow" width="90" height="130" viewBox="0 0 90 130"><g transform="translate(-555 -820)"><path d="M634 829l-20 18 5 2-57 86.500 3 2 57-86.500 4 3z" fill="#f00" stroke="#903030" stroke-width=".6"/></g></svg>

<div class="ime"><span>CH</span><svg width="12" height="14" viewBox="0 0 12 14"><path d="M4 1c8 2 7 11-2 12 4-1 5-4 3-6" stroke="#333"/></svg><span>简</span></div>

<div class="brand">
  <svg width="46" height="44" viewBox="0 0 46 44">
    <defs><linearGradient id="bg1" x1="0" y1="1" x2="1" y2="0"><stop offset="0" stop-color="#2f6fb5"/><stop offset="1" stop-color="#5cc0ee"/></linearGradient><linearGradient id="bg2" x1="0" y1="1" x2="1" y2="0"><stop offset="0" stop-color="#e6d84a"/><stop offset="1" stop-color="#46b56a"/></linearGradient></defs>
    <path d="M44 1C22 1 2 12 2 26c0 6 4 10 9 11-3-4-2-8-1-11C13 14 27 5 44 1z" fill="url(#bg1)" stroke="none"/>
    <path d="M6 40c18 1 34-5 36-15 1-7-5-10-12-10 4 2 6 5 4 10-3 8-14 13-28 15z" fill="url(#bg2)" stroke="none"/>
    <path d="M32 17c-7-4-17 2-18 9 0 5 6 7 11 4-5 0-6-3-4-6 2-4 6-6 11-7z" fill="#4a94d6" stroke="none"/>
  </svg>
  <div><b>极光下载站</b><em>www.xz7.com</em></div>
</div>

<script src="grid.js"></script>
</body>
</html>
```
FILE: styles.css
```css
* { box-sizing: border-box; }
html, body { height: 100%; }
body {
  margin: 0; display: flex; flex-direction: column; position: relative; overflow: hidden;
  font: 12px/16px "Noto Sans", "Noto Sans CJK SC", sans-serif; color: #222;
  background: linear-gradient(90deg, #e6e4e0 0, #e6e6da 7%, #ece4e0 26%, #ede2e0 52%, #e4e4e1 76%, #e9e4e1 86%, #e9e4e1 100%);
}
button, input, select { font: inherit; color: inherit; margin: 0; }
button { border: 0; background: none; padding: 0; white-space: nowrap; }
a { color: inherit; text-decoration: none; }
svg { fill: none; stroke: #333; stroke-width: 1.1; flex: none; display: block; }
.defs { position: absolute; width: 0; height: 0; }
.plain { display: flex; align-items: center; justify-content: center; }
.vsep { width: 1px; height: 16px; background: #c9c4c1; flex: none; }

.screen-clip { position: absolute; left: 865px; top: 0; width: 190px; height: 6px; background: #005b92; border: 1px solid #061a28; border-top: 0; border-radius: 0 0 4px 4px; box-shadow: 0 1px 4px #0008; }

/* title bar */
.titlebar { display: flex; align-items: center; height: 36px; padding: 5px 10px 0 4px; flex: none; }
.doc-tab { display: flex; align-items: center; gap: 6px; height: 30px; border-radius: 6px; background: #dadad2; margin-right: 4px; padding: 0 12px; flex: none; }
.doc-tab.home { width: 120px; }
.doc-tab.tpl { width: 132px; }
.doc-tab.active { width: 240px; background: #fff; margin-right: 10px; padding: 0 12px 0 8px; box-shadow: 0 0 2px #0004; }
.dirty { width: 6px; height: 6px; border-radius: 50%; background: #888; margin-left: auto; }
.titlebar > .plain { margin-right: 8px; }
.window-tools { display: flex; align-items: center; gap: 13px; margin-left: auto; }
.window-tools .win { margin-left: 8px; }
.window-tools .win + .win { margin-left: 7px; }

/* menu bar */
.menubar { display: flex; align-items: center; height: 38px; padding: 0 13px 0 18px; flex: none; }
.file { gap: 6px; margin-right: 12px; }
.quick { display: flex; gap: 6px; margin: 0 10px; }
.off svg { stroke: #aaa; }
.tabs { display: flex; gap: 30px; font-size: 13px; line-height: 24px; margin: 0 32px 0 21px; }
.tabs .on { color: #00796b; font-weight: 700; box-shadow: 0 2px #00796b; }
.find { margin-left: 9px; }
.cloud { display: flex; align-items: center; gap: 3px; margin-left: auto; }
.share { display: flex; align-items: center; gap: 4px; margin-left: 9px; width: 56px; height: 24px; padding: 0 6px; border-radius: 4px; background: #009a87; color: #fff; }

/* ribbon */
.ribbon { display: flex; flex: none; height: 75px; margin: 0 13px 0 12px; padding: 4px 0 3px; background: #fff; border: 1px solid #cfc9c6; border-radius: 8px; box-shadow: 0 1px 4px #0003; position: relative; z-index: 1; }
.group { display: flex; position: relative; padding-top: 4px; border-right: 1px solid #d9d9d9; flex: none; }
.group:last-child { border: 0; }
.launch { position: absolute; right: 3px; bottom: 0; }
.row { display: flex; align-items: center; height: 28px; }
.gap4 { gap: 4px; }
.tool { display: flex; align-items: center; justify-content: center; gap: 4px; min-width: 24px; height: 24px; border-radius: 4px; }
.tool.sel { background: #e4e4e4; }
.tool.lab span { margin-left: -2px; }
.tool:not(.lab) svg + svg { margin-left: -1px; }
.big { display: flex; flex-direction: column; align-items: center; }
.big > svg { margin: 5px 0 3px; }
.big span { display: flex; align-items: center; gap: 2px; height: 28px; }
.g-clip { width: 156px; padding-left: 17px; }
.g-clip .big { margin-right: 11px; }
.g-clip .tool { justify-content: flex-start; }
.g-font { width: 288px; padding-left: 5px; }
.tight .tool { width: 28px; }
.tight .split { width: 40px; justify-content: flex-start; padding-left: 4px; }
.g-font .combo { margin-left: 2px; }
.g-font .combo + .combo { margin-left: -1px; }
.step { margin: 0 3px 0 7px; }
.combo { appearance: none; height: 24px; border: 1px solid #bdbdbd; padding: 0 0 0 11px; border-radius: 4px; background: #fff url("data:image/svg+xml,%3Csvg xmlns='http://www.w3.org/2000/svg' width='10' height='6'%3E%3Cpath d='M1 1l4 4 4-4' fill='none' stroke='%23777'/%3E%3C/svg%3E") no-repeat right 5px center; }
.font-name { width: 153px; border-radius: 4px 0 0 4px; }
.font-size { width: 62px; border-radius: 0 4px 4px 0; }
.num-format { width: 80px; margin-right: 7px; }
.g-align { width: 225px; padding-left: 8px; }
.g-align .lab { margin-left: 4px; }
.g-num { width: 170px; padding-left: 8px; }
.yen { width: 39px; justify-content: flex-start; }
.g-rows { width: 97px; padding-left: 11px; }
.g-cond { width: 127px; padding-left: 12px; }
.g-cond .big { margin-right: 11px; }
.g-edit { padding-left: 11px; }
.g-edit .row { gap: 12px; }

/* work area */
.work { display: flex; flex: 1; min-height: 0; }
.sheet-side { flex: 1; min-width: 0; display: flex; flex-direction: column; }
.formula-row { display: flex; gap: 8px; padding: 7px 12px; flex: none; background: linear-gradient(#eee0, #eee 90%); }
.name-box, .formula-box { height: 28px; border: 1px solid #cfcac7; border-bottom-color: #b9b9b9; border-radius: 5px; background: #fff; }
.name-box { width: 163px; padding: 0 20px 0 0; text-align: center; background: #fff url("data:image/svg+xml,%3Csvg xmlns='http://www.w3.org/2000/svg' width='10' height='6'%3E%3Cpath d='M1 1l4 4 4-4' fill='none' stroke='%23777'/%3E%3C/svg%3E") no-repeat right 6px center; }
.formula-box { flex: 1; display: flex; align-items: center; padding-left: 20px; }
.formula-box input { flex: 1; border: 0; background: none; padding: 0 7px; font: 16px/20px "Liberation Serif", serif; }
.fx { width: 32px; height: 20px; margin: 0 4px 0 5px; font: italic 18px/20px "Liberation Serif", serif; }
.grid-row { display: flex; flex: 1; min-height: 0; }
.grid-view { flex: 1; min-width: 0; overflow: hidden; background: #fff; }
.grid { table-layout: fixed; border-spacing: 0; width: 0; font: 300 21px/22px "Liberation Serif", "Noto Sans CJK SC", serif; color: #000; }
.grid col { width: 104px; }
.grid .c-head { width: 50px; }
.grid .c-wide { width: 186px; }
.grid th, .grid td { height: 26px; padding: 0; border: solid #e2e2e2; border-width: 0 1px 1px 0; text-align: center; white-space: nowrap; }
.grid th { background: #eee; color: #555; font: 18px/20px "Noto Sans", sans-serif; border-color: #d6d6d6; }
.grid tbody th { border-bottom-color: #e0e0e0; padding-bottom: 4px; }
.grid thead th { height: 29px; padding-left: 1px; }
.grid .corner { border-color: #eee; }
.corner svg { margin-left: 20px; }
.grid .hot { background: #dadada; color: #00796b; }
.grid thead .hot { border-bottom: 2px solid #43901f; }
.grid tbody .hot { border-right: 2px solid #43901f; }
.grid .first td, .grid .first th { height: 39px; }
.grid td:nth-child(-n+4) { padding-top: 3px; }
.grid tr:nth-child(-n+6) td:nth-child(-n+4) { border-color: #000; }
.grid .red { color: #f00; }
.current { position: relative; }
.current::before { content: ""; position: absolute; inset: -2px; border: 3px solid #43901f; }
.current::after { content: ""; position: absolute; right: -3px; bottom: -3px; width: 6px; height: 6px; background: #43901f; box-shadow: -1px -1px #fff; }
.vscroll { width: 17px; flex: none; display: flex; flex-direction: column; align-items: center; border-left: 1px solid #dcdcdc; padding-bottom: 8px; }
.vs-head { height: 29px; align-self: stretch; background: #eee; border-bottom: 1px solid #d6d6d6; flex: none; margin-left: -1px; }
.vs-dash { width: 8px; height: 2px; background: #aaa; margin: 6px 0 8px; flex: none; }
.vs-thumb { width: 8px; flex: 1; border-radius: 4px; background: #cdc9c7; margin: 9px 0 52px; }
.sheet-tabs { display: flex; align-items: flex-start; height: 26px; flex: none; border-top: 1px solid #d8d3d0; background: #ede3e0; }
.nav-arrows { display: flex; align-items: center; gap: 10px; height: 23px; width: 102px; padding-left: 13px; }
.nav-arrows svg { stroke: #999; stroke-width: 1.700; }
.sheet-tab { width: 81px; height: 24px; margin-top: -1px; background: #fff; border-radius: 0 0 6px 6px; box-shadow: 0 1px 2px #0003; color: #00796b; font: bold 17px/22px "Noto Sans", sans-serif; }
.add { height: 25px; margin-left: 7px; }
.hscroll { display: flex; align-items: center; height: 23px; margin: 0 19px 0 auto; width: 638px; }
.tick { width: 2px; height: 8px; background: #b5b0ae; }
.hscroll svg { margin-left: 12px; }
.hs-thumb { flex: 1; height: 8px; margin: 0 36px 0 8px; border-radius: 4px; background: #cfc8c5; }
.hscroll .tick:last-child { margin-left: 12px; }

/* selection pane */
.pane { width: 261px; flex: none; display: flex; flex-direction: column; padding: 15px 16px 13px 16px; border-left: 1px solid #cfcac7; background: linear-gradient(#e9e4e100 40%, #ede3e0); }
.pane-head { display: flex; align-items: center; height: 20px; padding: 0 6px 0 4px; font-size: 14px; }
.pane-title { gap: 6px; color: #111; }
.pin { margin: 0 14px 0 auto; }
.pane-sub { margin: 16px 0 10px; color: #4a4a66; line-height: 16px; }
.object-list { flex: 1; background: #fff; border: 1px solid #d0cbc8; border-radius: 5px; }
.order, .show { display: flex; align-items: center; gap: 4px; margin-top: 8px; height: 24px; }
.order span { margin-right: 4px; color: #1d2540; }
.order button, .show button { height: 24px; border: 1px solid #d2ccc9; border-radius: 4px; display: flex; align-items: center; justify-content: center; }
.order button { width: 24px; }
.show button { width: 60px; color: #a09a98; }
.rail { width: 57px; flex: none; display: flex; flex-direction: column; align-items: center; gap: 8px; border-left: 1px solid #cfcac7; background: linear-gradient(#e9e4e100 40%, #ede5e0); padding-top: 24px; }
.rail-dash { width: 14px; height: 2px; background: #999; margin-bottom: 7px; }
.rail button { width: 32px; height: 32px; display: flex; align-items: center; justify-content: center; border-radius: 5px; }
.rail .on { background: #d1ccc9; }

/* status bar */
.status { display: flex; align-items: center; height: 25px; flex: none; padding: 0 17px 2px 16px; border-top: 1px solid #d2c8c5; background: #ede3e0; }
.status-right { display: flex; align-items: center; margin-left: auto; }
.dd { gap: 5px; margin: 0 14px 0 18px; }
.view { width: 24px; height: 22px; border-radius: 4px; margin-left: 8px; }
.view.on { background: #d2ccc9; }
.view + .vsep { margin-left: 8px; }
.zoomv { gap: 11px; margin: 0 17px 0 16px; color: #223; }
.zoom { appearance: none; width: 108px; height: 12px; margin: 0 12px 0 14px; background: linear-gradient(90deg, #1f66d0 56%, #b5b0ae 56%) no-repeat center / 100% 2px; }
.zoom::-webkit-slider-thumb { appearance: none; width: 11px; height: 11px; border-radius: 50%; background: #888; border: 3px solid #fff; box-shadow: 0 0 2px #0006; }
.full { margin-left: 19px; }

/* find dialog */
.dialog { position: absolute; left: 609px; top: 406px; width: 675px; border: 1px solid #9c9c9c; background: #f0f0f0; color: #000; box-shadow: 0 4px 12px #0005; z-index: 2; }
.dlg-title { display: flex; align-items: center; gap: 5px; height: 25px; padding: 0 9px 2px 3px; background: #fff; color: #888; }
.dlg-title .plain { margin-left: auto; }
.dlg-tabs { display: flex; align-items: flex-end; padding: 6px 7px 0; }
.dlg-tabs button { height: 23px; width: 63px; border: solid #dcdcdc; border-width: 1px 1px 0 0; }
.dlg-tabs .on { height: 25px; width: 65px; background: #fff; border-left-width: 1px; margin-bottom: -1px; position: relative; }
.dlg-panel { margin: 0 9px 0 7px; padding: 8px 8px 10px 7px; background: #fff; border: 1px solid #dcdcdc; }
.what { display: flex; align-items: center; }
.what label { width: 78px; }
.what input { width: 356px; height: 25px; border: 1px solid #777; padding: 0 20px 0 4px; background: url("data:image/svg+xml,%3Csvg xmlns='http://www.w3.org/2000/svg' width='10' height='6'%3E%3Cpath d='M1 1l4 4 4-4' fill='none' stroke='%23444'/%3E%3C/svg%3E") no-repeat right 4px center; }
.what output { width: 109px; height: 25px; margin: 0 11px 0 9px; border: solid #e3e3e3; border-width: 1px 0 0 1px; text-align: center; color: #f00; font-size: 14px; line-height: 22px; }
.btn { display: flex; align-items: center; justify-content: center; gap: 6px; height: 29px; background: #e1e1e1; border: 1px solid #adadad; flex: none; }
.w77 { width: 77px; } .w87 { width: 87px; } .w89 { width: 89px; }
.what .btn { gap: 10px; }
.opts .w89 { gap: 4px; }
.tri { border: 4px solid transparent; border-top: 5px solid #000; border-bottom: 0; }
.opts { display: flex; align-items: flex-end; gap: 15px; margin-top: 34px; }
.opt-grid { display: grid; grid-template-columns: 71px 70px auto; row-gap: 4px; align-items: center; margin-right: auto; }
.opt-grid select { appearance: none; height: 22px; border: 1px solid #adadad; border-radius: 0; padding: 0 0 0 3px; background: #e1e1e1 url("data:image/svg+xml,%3Csvg xmlns='http://www.w3.org/2000/svg' width='8' height='5'%3E%3Cpath d='M0 0h8L4 5z'/%3E%3C/svg%3E") no-repeat right 5px center; }
.chk { display: flex; align-items: center; gap: 5px; padding-left: 6px; }
.chk input { appearance: none; width: 13px; height: 13px; border: 1px solid #333; background: #fff; }
.dlg-actions { display: flex; align-items: center; gap: 8px; padding: 9px 8px 8px 11px; }
.dlg-actions a { display: flex; align-items: center; gap: 6px; margin-right: auto; color: #4592e6; }
.dlg-actions .close { margin-left: 21px; }
.results { margin: 0 7px; height: 135px; background: #fff; border: 1px solid #828790; }
.results table { table-layout: fixed; border-spacing: 0; width: 100%; }
.r70 { width: 70px; } .r50 { width: 50px; } .r96 { width: 96px; }
.results th { height: 25px; padding: 0 0 0 5px; text-align: left; font-weight: 400; border-right: 1px solid #e5e5e5; }
.results td { height: 17px; padding: 0 0 0 4px; line-height: 16px; white-space: nowrap; }
.results td:last-child { padding-left: 5px; }
.dlg-status { display: flex; justify-content: space-between; align-items: flex-end; height: 18px; padding: 0 3px 3px 7px; line-height: 14px; }
.mark-box { position: absolute; left: -6px; top: 277px; width: 528px; height: 115px; border: 3px solid #f00; }
.mark-arrow { position: absolute; left: 555px; top: 820px; filter: drop-shadow(3px 3px 2px #0006); }

.ime { position: absolute; right: 309px; top: 757px; width: 61px; height: 26px; display: flex; align-items: center; justify-content: center; gap: 3px; background: #fff; border: 1px solid #999; border-radius: 5px; box-shadow: 1px 2px 4px #0007; color: #444; z-index: 2; }

.brand { position: absolute; right: 11px; bottom: 7px; display: flex; opacity: .85; z-index: 2; }
.brand div { display: flex; flex-direction: column; }
.brand b { font-size: 21px; line-height: 24px; color: #5b97d2; }
.brand em { font: bold 16px/20px "Liberation Sans", sans-serif; color: #6cc36c; }
```
FILE: grid.js
```js
// Completes the sheet with its empty columns and rows.
(function () {
  var grid = document.getElementById('grid');
  var cols = 'DEFGHIJKLMN'.split('');
  var head = grid.tHead.rows[0];
  var body = grid.tBodies[0];
  var group = grid.querySelector('colgroup');
  function add(parent, tag, text) {
    var el = document.createElement(tag);
    if (text) el.textContent = text;
    parent.appendChild(el);
  }
  cols.forEach(function (name) {
    add(group, 'col');
    add(head, 'th', name);
    Array.prototype.forEach.call(body.rows, function (row) { add(row, 'td'); });
  });
  for (var n = 7; n <= 30; n++) {
    var tr = document.createElement('tr');
    add(tr, 'th', n < 30 ? String(n) : '');
    for (var c = 0; c < cols.length + 3; c++) add(tr, 'td');
    body.appendChild(tr);
  }
})();
```
